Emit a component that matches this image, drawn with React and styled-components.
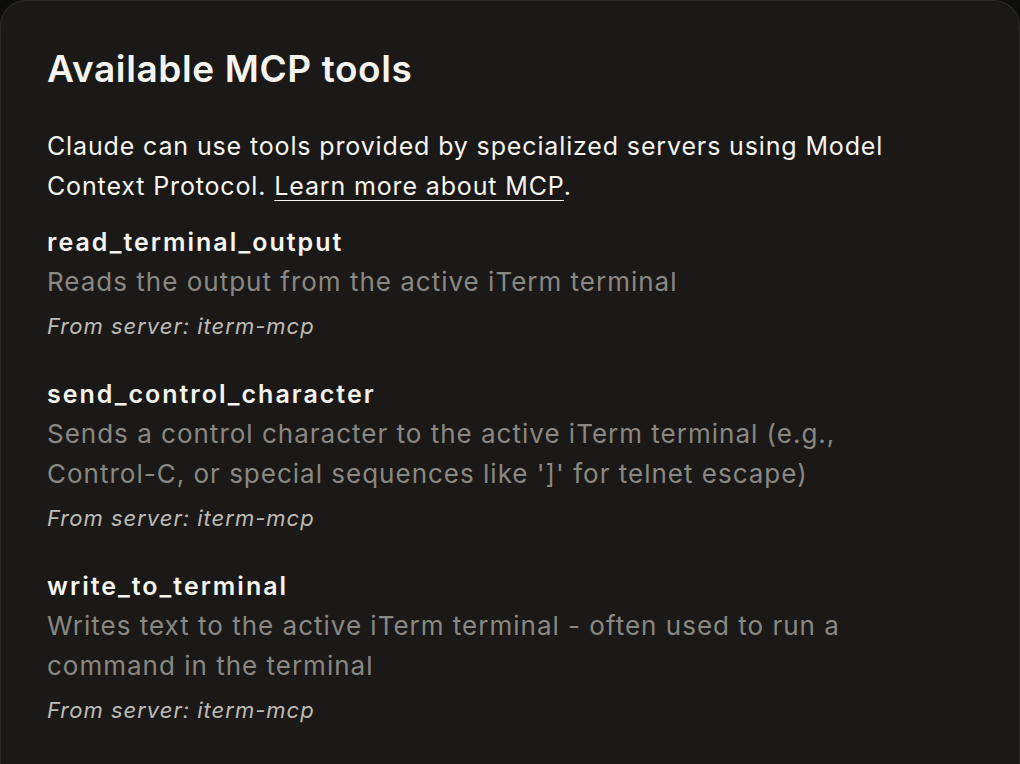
import styled, { createGlobalStyle } from "styled-components";

const GlobalStyle = createGlobalStyle`
  html, body {
    margin: 0;
    padding: 0;
    background: #0d0d0c;
  }
  body {
    font-family: Inter, "Noto Sans", sans-serif;
    -webkit-font-smoothing: antialiased;
  }
`;

const Panel = styled.div`
  box-sizing: border-box;
  min-height: 100vh;
  background: #1a1918;
  border: 1px solid #2c2b29;
  border-bottom: none;
  border-radius: 26px 26px 0 0;
  padding: 46px 46px 40px;
`;

const Title = styled.h1`
  margin: 0 0 35px;
  font-size: 37px;
  line-height: 44px;
  font-weight: 600;
  color: #f5f4ef;
  letter-spacing: 0.6px;
`;

const Intro = styled.p`
  margin: 0 0 16px;
  max-width: 880px;
  font-size: 25px;
  line-height: 40px;
  letter-spacing: 0.86px;
  color: #f5f4ef;

  a {
    color: inherit;
    text-decoration: underline;
    text-underline-offset: 5px;
    text-decoration-thickness: 1px;
  }
`;

const ToolList = styled.div`
  display: flex;
  flex-direction: column;
  gap: 28px;
`;

const Tool = styled.div`
  display: flex;
  flex-direction: column;
`;

const ToolName = styled.div`
  font-size: 25px;
  line-height: 40px;
  font-weight: 600;
  letter-spacing: 2px;
  color: #f5f4ef;
`;

const ToolDesc = styled.div`
  max-width: 880px;
  font-size: 26px;
  line-height: 40px;
  letter-spacing: 1px;
  color: #8a8882;
`;

const Source = styled.div`
  margin-top: 4px;
  font-size: 22px;
  line-height: 40px;
  letter-spacing: 1px;
  font-style: italic;
  color: #bdbbb3;
`;

const tools = [
  {
    name: "read_terminal_output",
    desc: "Reads the output from the active iTerm terminal",
  },
  {
    name: "send_control_character",
    desc: "Sends a control character to the active iTerm terminal (e.g., Control-C, or special sequences like ']' for telnet escape)",
  },
  {
    name: "write_to_terminal",
    desc: "Writes text to the active iTerm terminal - often used to run a command in the terminal",
  },
];

export default function App() {
  return (
    <>
      <GlobalStyle />
      <Panel>
        <Title>Available MCP tools</Title>
        <Intro>
          Claude can use tools provided by specialized servers using Model
          Context Protocol. <a href="#">Learn more about MCP</a>.
        </Intro>
        <ToolList>
          {tools.map((t) => (
            <Tool key={t.name}>
              <ToolName>{t.name}</ToolName>
              <ToolDesc>{t.desc}</ToolDesc>
              <Source>From server: iterm-mcp</Source>
            </Tool>
          ))}
        </ToolList>
      </Panel>
    </>
  );
}
